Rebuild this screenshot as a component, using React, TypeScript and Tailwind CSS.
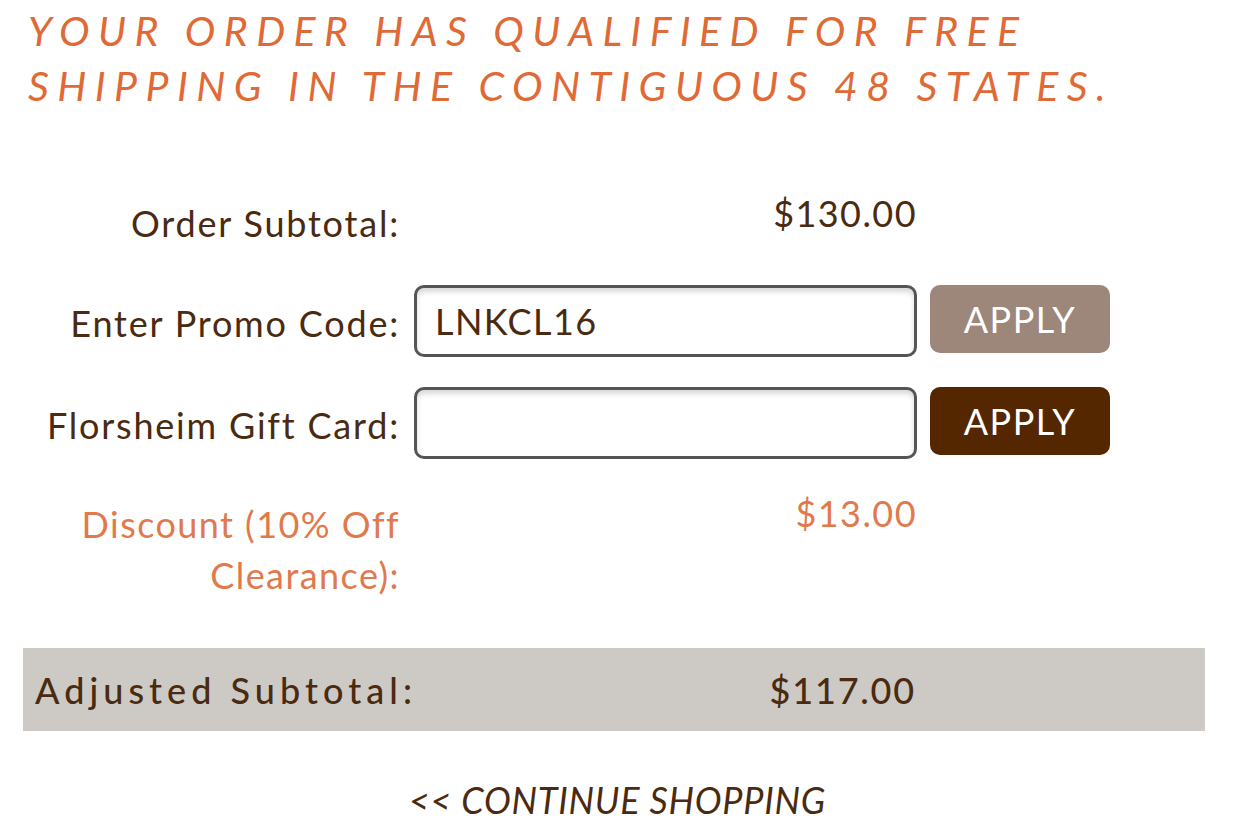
import React from "react";

const brown = "text-[#4a2a10]";

export default function App() {
  return (
    <div className="w-[1235px] h-[830px] bg-white overflow-hidden font-['Lato','Liberation_Sans',sans-serif]">
      <div className="pt-[3px] pl-[28px] text-[41px] leading-[55px] italic tracking-[0.205em] text-[#e06a36] whitespace-nowrap">
        <div>YOUR ORDER HAS QUALIFIED FOR FREE</div>
        <div>SHIPPING IN THE CONTIGUOUS 48 STATES.</div>
      </div>

      <div className="mt-[80px] flex flex-col text-[36px] tracking-[0.05em]">
        {/* Order subtotal */}
        <div className={`flex items-start h-[77px] ${brown}`}>
          <div className="w-[400px] text-right leading-[40px] pt-[10px] whitespace-nowrap">Order Subtotal:</div>
          <div className="ml-[14px] w-[503px] text-right leading-[40px] tracking-[0.04em]">$130.00</div>
        </div>

        {/* Promo */}
        <div className={`flex items-center h-[102px] ${brown}`}>
          <div className="w-[400px] text-right leading-[40px] pt-[4px] whitespace-nowrap">Enter Promo Code:</div>
          <input
            className="ml-[14px] w-[503px] h-[72px] rounded-[10px] border-[3px] border-[#555555] px-[18px] text-[36px] tracking-[0.04em] text-[#4a2a10] shadow-[inset_0_4px_5px_rgba(0,0,0,0.15)] outline-none font-['Lato','Liberation_Sans',sans-serif]"
            defaultValue="LNKCL16"
          />
          <button className="ml-[13px] w-[180px] h-[68px] -mt-[4px] rounded-[10px] bg-[#9c877a] text-white text-[36px] leading-none tracking-[0.04em]">
            APPLY
          </button>
        </div>

        {/* Gift card */}
        <div className={`flex items-center h-[102px] ${brown}`}>
          <div className="w-[400px] text-right leading-[40px] pt-[4px] whitespace-nowrap">Florsheim Gift Card:</div>
          <input className="ml-[14px] w-[503px] h-[72px] rounded-[10px] border-[3px] border-[#555555] px-[18px] text-[36px] shadow-[inset_0_4px_5px_rgba(0,0,0,0.15)] outline-none" />
          <button className="ml-[13px] w-[180px] h-[68px] -mt-[4px] rounded-[10px] bg-[#552700] text-white text-[36px] leading-none tracking-[0.04em]">
            APPLY
          </button>
        </div>

        {/* Discount */}
        <div className="flex items-start h-[153px] mt-[21px] text-[#e07a4c] tracking-[0.04em]">
          <div className="w-[400px] text-right leading-[51px] pt-[4px] whitespace-nowrap">
            Discount (10% Off
            <br />
            Clearance):
          </div>
          <div className="ml-[14px] w-[503px] text-right leading-[40px] -mt-[2px]">$13.00</div>
        </div>

        {/* Adjusted subtotal */}
        <div className={`ml-[23px] w-[1182px] h-[83px] bg-[#cdcac5] flex items-center ${brown}`}>
          <div className="w-[377px] pl-[12px] tracking-[0.14em] font-medium whitespace-nowrap">Adjusted Subtotal:</div>
          <div className="w-[516px] text-right tracking-[0.05em] font-medium">$117.00</div>
        </div>

        {/* Continue */}
        <div className={`mt-[42px] text-center text-[36px] italic tracking-[0.02em] ${brown}`}>
          &lt;&lt; CONTINUE SHOPPING
        </div>
      </div>
    </div>
  );
}
